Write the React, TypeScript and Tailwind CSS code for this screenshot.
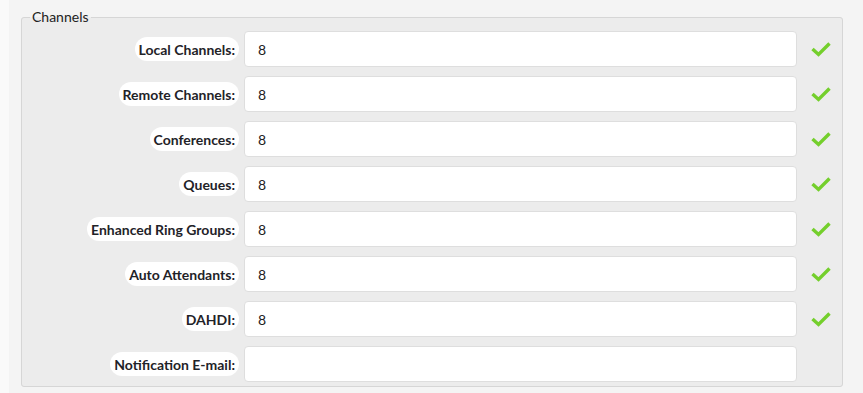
const rows = [
  { label: 'Local Channels:', value: '8', ok: true },
  { label: 'Remote Channels:', value: '8', ok: true },
  { label: 'Conferences:', value: '8', ok: true },
  { label: 'Queues:', value: '8', ok: true },
  { label: 'Enhanced Ring Groups:', value: '8', ok: true },
  { label: 'Auto Attendants:', value: '8', ok: true },
  { label: 'DAHDI:', value: '8', ok: true },
  { label: 'Notification E-mail:', value: '', ok: false },
];

function Check() {
  return (
    <svg width="20" height="16" viewBox="0 0 20 16" fill="none">
      <polyline
        points="1.5,8 7.5,13.5 18.5,2.5"
        stroke="#74cf2c"
        strokeWidth="3.4"
        strokeLinecap="butt"
        strokeLinejoin="miter"
      />
    </svg>
  );
}

export default function App() {
  return (
    <div className="w-[863px] h-[393px] bg-[#fafafa] font-['Lato',sans-serif] overflow-hidden">
      <div className="ml-[9px] h-full bg-[#f4f4f4] pl-[12px] pr-[20px] pt-[9px]">
        <fieldset className="w-[822px] border border-[#d6d6d6] rounded-[3px] bg-[#ececec] pt-[6px] pb-[4px]">
          <legend className="ml-[8px] px-[2px] text-[14px] leading-[16px] text-[#222]">Channels</legend>
          <div className="flex flex-col gap-[9px]">
            {rows.map((r) => (
              <div key={r.label} className="flex items-center">
                <div className="w-[217px] flex justify-end">
                  <span className="bg-white rounded-full px-[4px] h-[24px] flex items-center text-[14px] font-bold text-[#1f2328]">
                    {r.label}
                  </span>
                </div>
                <div className="ml-[5px] w-[553px] h-[36px] bg-white border border-[#dedede] rounded-[4px] flex items-center pl-[13px] text-[14px] text-[#222]">
                  {r.value}
                </div>
                <div className="ml-[14px] w-[20px] flex items-center">{r.ok && <Check />}</div>
              </div>
            ))}
          </div>
        </fieldset>
      </div>
    </div>
  );
}
